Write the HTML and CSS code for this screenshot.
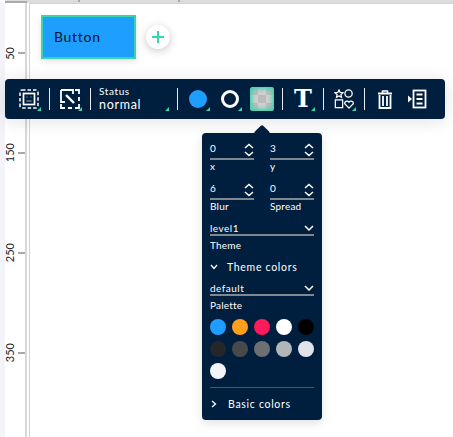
FILE: index.html
```html
<!DOCTYPE html>
<html lang="en">
<head>
  <meta charset="UTF-8">
  <title>Style editor</title>
  <link rel="stylesheet" href="styles.css">
</head>
<body>
  <div class="ruler-top"><b class="ruler-corner"></b><i class="tick t1"></i><i class="tick t2"></i></div>
  <div class="workspace">
    <div class="side-strip"></div>
    <div class="ruler-left">
      <div class="ruler-mark m50"><span>50</span><i></i></div>
      <div class="ruler-mark m150"><span>150</span><i></i></div>
      <div class="ruler-mark m250"><span>250</span><i></i></div>
      <div class="ruler-mark m350"><span>350</span><i></i></div>
    </div>
    <div class="canvas">
      <div class="widget-row">
        <div class="widget">Button</div>
        <div class="add-btn">
          <svg width="14" height="14" viewBox="0 0 14 14"><path d="M7 1v12M1 7h12" stroke="#36d6ad" stroke-width="2"/></svg>
        </div>
      </div>
    </div>
  </div>

  <div class="toolbar">
    <div class="tool has-corner">
      <svg width="20" height="20" viewBox="0 0 20 20" fill="none" stroke="#fff"><rect x="1" y="1" width="18" height="18" rx="2" stroke-width="1.500" stroke-dasharray="3.500 2"/><rect x="4.500" y="4.500" width="11" height="11" stroke-width="1.700"/><path d="M7.500 8h1M11.500 8h1M7.500 12h5" stroke="#9fb2c4"/></svg>
    </div>
    <span class="divider"></span>
    <div class="tool has-corner">
      <svg width="20" height="20" viewBox="0 0 20 20" fill="none" stroke="#fff"><path d="M15 1h4v4M19 8v4M19 15v4h-4M12 19H8M5 19H1v-4" stroke-width="1.800"/><path d="M1 1h12v4M1 1v12h4" stroke-width="1.800"/><path d="M6 6l8 8" stroke-width="2.400"/></svg>
    </div>
    <span class="divider"></span>
    <div class="status has-corner">
      <span class="status-label">Status</span>
      <span class="status-value">normal</span>
    </div>
    <span class="divider"></span>
    <div class="tool has-corner"><span class="dot-fill"></span></div>
    <div class="tool has-corner"><span class="dot-ring"></span></div>
    <div class="tool"><span class="shadow-swatch"></span></div>
    <span class="divider"></span>
    <div class="tool has-corner"><span class="big-t">T</span></div>
    <span class="divider"></span>
    <div class="tool has-corner">
      <svg width="20" height="20" viewBox="0 0 22 22" fill="none" stroke="#fff" stroke-width="1.400"><path d="M5.500 1l1.300 2.800 3 .4-2.200 2 .6 3-2.700-1.500-2.700 1.500.6-3-2.200-2 3-.4z"/><circle cx="16" cy="5" r="4"/><rect x="1.500" y="12" width="8" height="8.500"/><path d="M16.500 21l-4.500-4.500c-1.200-2.500 2.800-4.500 4.500-2 1.700-2.500 5.700-.5 4.500 2z"/></svg>
    </div>
    <span class="divider"></span>
    <div class="tool">
      <svg width="16" height="19" viewBox="0 0 16 19" fill="none" stroke="#fff"><path d="M1 3.500h14" stroke-width="2"/><path d="M5.500 3V1h5v2" stroke-width="1.500"/><path d="M2.500 5v13h11V5" stroke-width="1.800"/><path d="M6 6v10M10 6v10" stroke-width="1.800"/></svg>
    </div>
    <div class="tool">
      <svg width="20" height="20" viewBox="0 0 20 20" fill="none" stroke="#fff"><path d="M1 6.500l4 3.500-4 3.500z" fill="#fff" stroke="none"/><rect x="6.500" y="1.500" width="12" height="17" stroke-width="1.800"/><path d="M9.500 5.500h6M9.500 10h6M9.500 14.500h6" stroke-width="1.800"/></svg>
    </div>
  </div>

  <div class="panel">
    <div class="panel-arrow"></div>
    <div class="num-grid">
      <label class="field">
        <span class="field-line"><span>0</span><svg class="spin" width="10" height="14" viewBox="0 0 10 14"><path d="M1 5l4-3.500L9 5M1 9l4 3.500L9 9" fill="none" stroke="#fff" stroke-width="1.500"/></svg></span>
        <span class="field-name">x</span>
      </label>
      <label class="field">
        <span class="field-line"><span>3</span><svg class="spin" width="10" height="14" viewBox="0 0 10 14"><path d="M1 5l4-3.500L9 5M1 9l4 3.500L9 9" fill="none" stroke="#fff" stroke-width="1.500"/></svg></span>
        <span class="field-name">y</span>
      </label>
      <label class="field">
        <span class="field-line"><span>6</span><svg class="spin" width="10" height="14" viewBox="0 0 10 14"><path d="M1 5l4-3.500L9 5M1 9l4 3.500L9 9" fill="none" stroke="#fff" stroke-width="1.500"/></svg></span>
        <span class="field-name">Blur</span>
      </label>
      <label class="field">
        <span class="field-line"><span>0</span><svg class="spin" width="10" height="14" viewBox="0 0 10 14"><path d="M1 5l4-3.500L9 5M1 9l4 3.500L9 9" fill="none" stroke="#fff" stroke-width="1.500"/></svg></span>
        <span class="field-name">Spread</span>
      </label>
    </div>

    <label class="field select-field select-theme">
      <span class="field-line"><span>level1</span><svg width="10" height="6" viewBox="0 0 10 6"><path d="M1 1l4 4 4-4" fill="none" stroke="#fff" stroke-width="1.500"/></svg></span>
      <span class="field-name">Theme</span>
    </label>

    <div class="section-head">
      <svg width="8" height="6" viewBox="0 0 8 6"><path d="M1 1l3 3.500L7 1" fill="none" stroke="#fff" stroke-width="1.300"/></svg>
      <span>Theme colors</span>
    </div>

    <label class="field select-field select-palette">
      <span class="field-line"><span>default</span><svg width="10" height="6" viewBox="0 0 10 6"><path d="M1 1l4 4 4-4" fill="none" stroke="#fff" stroke-width="1.500"/></svg></span>
      <span class="field-name">Palette</span>
    </label>

    <div class="palette">
      <span class="swatch c1"></span><span class="swatch c2"></span><span class="swatch c3"></span><span class="swatch c4"></span><span class="swatch c5"></span>
      <span class="swatch c6"></span><span class="swatch c7"></span><span class="swatch c8"></span><span class="swatch c9"></span><span class="swatch c10"></span>
      <span class="swatch c11"></span>
    </div>

    <div class="section-head section-basic">
      <svg width="6" height="8" viewBox="0 0 6 8"><path d="M1 1l3.500 3L1 7" fill="none" stroke="#fff" stroke-width="1.300"/></svg>
      <span>Basic colors</span>
    </div>
  </div>
</body>
</html>
```

FILE: styles.css
```css
* {
  box-sizing: border-box;
}
html, body {
  height: 100%;
}
body {
  margin: 0;
  overflow: hidden;
  position: relative;
  background: #fff;
  font-family: "Lato", sans-serif;
  color: #fff;
}
.ruler-top {
  position: relative;
  height: 3px;
  background: #dcdcdc;
  margin-left: 5px;
}
.ruler-corner {
  display: block;
  width: 22px;
  height: 2px;
  position: relative;
  top: 1px;
  background: #aaa;
}
.tick {
  position: absolute;
  top: 0;
  width: 2px;
  height: 2px;
  background: #aaa;
}
.t1 { left: 73px; }
.t2 { left: 173px; }
.workspace {
  display: flex;
  height: 434px;
}
.side-strip {
  width: 5px;
  background: #f3f4f9;
}
.ruler-left {
  position: relative;
  width: 22px;
  margin-right: 2px;
  border-right: 2px solid #d8d8d8;
}
.ruler-mark {
  position: absolute;
  left: 0;
  right: 0;
  display: flex;
  align-items: center;
  height: 20px;
  color: #222;
  font-size: 11px;
}
.ruler-mark span {
  width: 10px;
  writing-mode: vertical-rl;
  transform: rotate(180deg);
  line-height: 10px;
}
.ruler-mark i {
  margin-left: auto;
  width: 7px;
  height: 2px;
  background: #aaa;
}
.m50 { top: 40px; }
.m150 { top: 140px; }
.m250 { top: 240px; }
.m350 { top: 340px; }
.canvas {
  flex: 1;
  border-left: 1px solid #b5dcf5;
  border-top: 1px solid #b5dcf5;
  padding: 11px 0 0 11px;
}
.widget-row {
  display: flex;
  align-items: center;
  gap: 10px;
}
.widget {
  width: 95px;
  height: 44px;
  background: #1e9fff;
  border: 2px solid #36d6ad;
  color: #0a1119;
  font-size: 14px;
  letter-spacing: .7px;
  line-height: 40px;
  padding-left: 11px;
  box-shadow: 0 3px 6px rgba(0,0,0,.1);
}
.add-btn {
  width: 24px;
  height: 24px;
  border-radius: 50%;
  background: #fff;
  display: flex;
  align-items: center;
  justify-content: center;
  box-shadow: 0 2px 8px rgba(0,0,0,.22);
}
.toolbar {
  position: absolute;
  left: 5px;
  top: 79px;
  width: 440px;
  height: 40px;
  background: #001f3f;
  border-radius: 4px;
  display: flex;
  align-items: center;
  padding-left: 8px;
  box-shadow: 0 2px 18px rgba(0,0,0,.12);
}
.divider {
  width: 1px;
  height: 22px;
  margin: 0 4px;
  background: #e8ecf0;
  flex: none;
}
.tool {
  position: relative;
  width: 32px;
  height: 32px;
  display: flex;
  align-items: center;
  justify-content: center;
  flex: none;
}
.has-corner::after {
  content: "";
  position: absolute;
  right: 4px;
  bottom: 4px;
  border-left: 4px solid transparent;
  border-bottom: 4px solid #36d6ad;
}
.status {
  position: relative;
  width: 78px;
  height: 32px;
  padding: 2px 0 0 4px;
  flex: none;
  display: flex;
  flex-direction: column;
}
.status-label {
  font-size: 10px;
  line-height: 12px;
  letter-spacing: .6px;
}
.status-value {
  font-size: 12.500px;
  line-height: 15px;
  letter-spacing: .7px;
}
.dot-fill {
  width: 18px;
  height: 18px;
  border-radius: 50%;
  background: #1e9fff;
}
.dot-ring {
  width: 18px;
  height: 18px;
  border-radius: 50%;
  border: 3px solid #fff;
}
.shadow-swatch {
  width: 24px;
  height: 24px;
  border-radius: 3px;
  background: repeating-conic-gradient(#cfcfcf 0 25%, #bcbcbc 0 50%) 0 0 / 16px 16px;
  box-shadow: inset 0 0 4px 2px #36d6ad;
}
.big-t {
  font-family: "DejaVu Serif", serif;
  font-weight: 700;
  font-size: 24px;
  line-height: 1;
}
.panel {
  position: absolute;
  left: 202px;
  top: 133px;
  width: 120px;
  height: 287px;
  background: #001f3f;
  border-radius: 4px;
  padding: 8px 8px 0;
  box-shadow: 0 3px 10px rgba(0,0,0,.12);
}
.panel-arrow {
  position: absolute;
  left: 54px;
  top: -6px;
  width: 12px;
  height: 12px;
  background: #001f3f;
  border-radius: 2px;
  transform: rotate(45deg);
}
.num-grid {
  display: grid;
  grid-template-columns: 44px 44px;
  column-gap: 16px;
  row-gap: 8px;
}
.num-grid .field-line span {
  margin-bottom: 3px;
}
.field {
  display: block;
  position: relative;
}
.field-line {
  display: flex;
  align-items: center;
  justify-content: space-between;
  height: 19px;
  font-size: 10px;
  letter-spacing: .5px;
  border-bottom: 2px solid #7f8790;
}
.field-name {
  display: block;
  font-size: 10px;
  line-height: 13px;
  letter-spacing: .2px;
}
.select-field .field-line {
  padding-top: 4px;
}
.select-field .field-name {
  margin-top: 3px;
}
.select-theme {
  margin-top: 4px;
}
.select-palette {
  margin-top: 3px;
}
.section-head {
  display: flex;
  align-items: center;
  gap: 9px;
  height: 14px;
  margin-top: 8px;
  font-size: 10.500px;
  letter-spacing: .7px;
}
.palette {
  display: grid;
  grid-template-columns: repeat(5, 16px);
  gap: 6px;
  margin-top: 7px;
}
.swatch {
  width: 16px;
  height: 16px;
  border-radius: 50%;
}
.c1 { background: #1e9fff; }
.c2 { background: #ff9f1c; }
.c3 { background: #ff1a5b; }
.c4 { background: #fff; }
.c5 { background: #000; }
.c6 { background: #25262a; }
.c7 { background: #48494d; }
.c8 { background: #6e6f73; }
.c9 { background: #b4b5b9; }
.c10 { background: #e2e3e8; }
.c11 { background: #f3f4f9; }
.section-basic {
  margin-top: 8px;
  border-top: 1px solid #4b5563;
  height: 33px;
  padding-left: 1px;
  gap: 11px;
}
```
